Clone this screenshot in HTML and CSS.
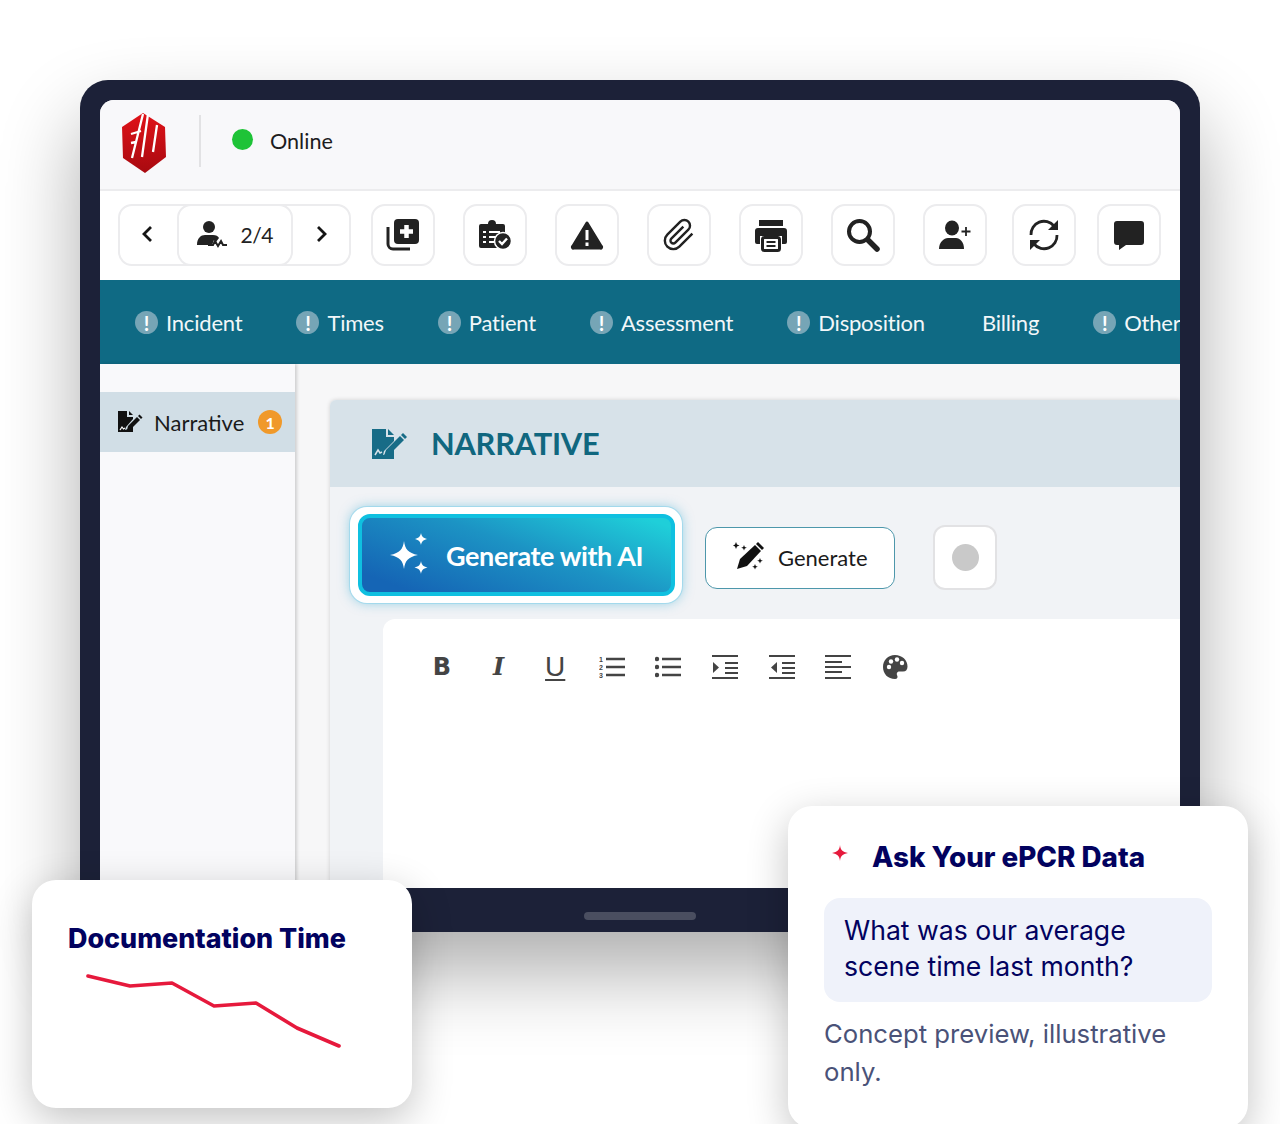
FILE: index.html
```html
<!DOCTYPE html>
<html lang="en">
<head>
    <meta charset="UTF-8">
    <title>ePCR Narrative</title>
    <link rel="stylesheet" href="styles.css">
</head>
<body>
    <div class="stage">
        <div class="device">
            <div class="screen">
                <header class="status-bar">
                    <svg class="logo" viewBox="0 0 44 60">
                        <defs>
                            <linearGradient id="logoRed" x1="0" y1="0" x2="0" y2="1">
                                <stop offset="0" stop-color="#e01218"/>
                                <stop offset="1" stop-color="#a80a10"/>
                            </linearGradient>
                        </defs>
                        <path d="M21 0 43 14 44 44 23 60 1 45 0 14Z" fill="url(#logoRed)"/>
                        <path d="M21 1 10 45M9 21 19 18M9 30 14 29M26 1 20 44M35 12 31 39" fill="none" stroke="#fff" stroke-width="2.300"/>
                    </svg>
                    <span class="divider"></span>
                    <span class="status-dot"></span>
                    <span class="status-text">Online</span>
                </header>

                <div class="toolbar">
                    <div class="pager">
                        <button class="pager-arrow">
                            <svg viewBox="0 0 24 24" width="24" height="24"><path d="M15 5l-7 7 7 7" fill="none" stroke="#151515" stroke-width="2.800"/></svg>
                        </button>
                        <div class="pager-count">
                            <svg viewBox="0 0 30 30" width="30" height="30" fill="#222">
                                <circle cx="12" cy="7" r="6"/>
                                <path d="M0 25c0-7 4-10 8-10h8c3 0 5 1 6 3l-3 4-2-2-2 5H0Z"/>
                                <path d="M11 25h5l2-4 3 5 3-5 2 4h4" fill="none" stroke="#222" stroke-width="2"/>
                            </svg>
                            <span>2/4</span>
                        </div>
                        <button class="pager-arrow">
                            <svg viewBox="0 0 24 24" width="24" height="24"><path d="M9 5l7 7-7 7" fill="none" stroke="#151515" stroke-width="2.800"/></svg>
                        </button>
                    </div>

                    <button class="tool-btn">
                        <svg viewBox="0 0 34 32" width="34" height="32">
                            <rect x="8" y="0" width="25" height="25" rx="4" fill="#222"/>
                            <path d="M20.500 6v13M14 12.500h13" stroke="#fff" stroke-width="4.500"/>
                            <path d="M2 8v17a5 5 0 0 0 5 5h17" fill="none" stroke="#222" stroke-width="3"/>
                        </svg>
                    </button>
                    <button class="tool-btn">
                        <svg viewBox="0 0 34 30" width="34" height="30">
                            <path d="M3 4h7a4 4 0 0 1 8 0h7a2 2 0 0 1 2 2v20a2 2 0 0 1-2 2H3a2 2 0 0 1-2-2V6a2 2 0 0 1 2-2Z" fill="#222"/>
                            <path d="M5 12h3M11 12h11M5 17h3M11 17h9M5 22h3M11 22h7" stroke="#fff" stroke-width="2"/>
                            <circle cx="25" cy="21" r="8.500" fill="#222" stroke="#fff" stroke-width="1.500"/>
                            <path d="M21 21l3 3 5-5.500" fill="none" stroke="#fff" stroke-width="2.400"/>
                        </svg>
                    </button>
                    <button class="tool-btn">
                        <svg viewBox="0 0 34 30" width="34" height="30">
                            <path d="M17 3 31 26a1 1 0 0 1-1 2H4a1 1 0 0 1-1-2Z" fill="#222" stroke="#222" stroke-width="3" stroke-linejoin="round"/>
                            <path d="M17 10v10M17 22.500v3.500" stroke="#fff" stroke-width="3"/>
                        </svg>
                    </button>
                    <button class="tool-btn">
                        <svg viewBox="0 0 24 24" width="34" height="34"><path d="M21.440 11.050l-9.190 9.190a6 6 0 0 1-8.490-8.490l9.190-9.190a4 4 0 0 1 5.660 5.660l-9.200 9.190a2 2 0 0 1-2.830-2.830l8.490-8.480" fill="none" stroke="#222" stroke-width="1.700"/></svg>
                    </button>
                    <button class="tool-btn">
                        <svg viewBox="0 0 34 34" width="34" height="34">
                            <path d="M5 2h24v6H5Z" fill="#222"/>
                            <path d="M4 10h26a3 3 0 0 1 3 3v11a2 2 0 0 1-2 2h-3v-8H6v8H3a2 2 0 0 1-2-2V13a3 3 0 0 1 3-3Z" fill="#222"/>
                            <rect x="8.500" y="19.500" width="17" height="13" rx="2" fill="#fff" stroke="#222" stroke-width="3"/>
                            <path d="M12.500 24h9M12.500 28h9" stroke="#222" stroke-width="2"/>
                        </svg>
                    </button>
                    <button class="tool-btn">
                        <svg viewBox="0 0 34 34" width="34" height="34">
                            <circle cx="13.500" cy="13.500" r="10.500" fill="none" stroke="#222" stroke-width="4"/>
                            <path d="M22 22l9 9" stroke="#222" stroke-width="5.500" stroke-linecap="round"/>
                        </svg>
                    </button>
                    <button class="tool-btn">
                        <svg viewBox="0 0 34 30" width="34" height="30" fill="#222">
                            <ellipse cx="14" cy="8" rx="7" ry="7.500"/>
                            <path d="M1 29c0-7 5-11 9-11h8c4 0 8 4 8 11Z"/>
                            <path d="M28 7v9M23.500 11.500h9" stroke="#222" stroke-width="1.800"/>
                        </svg>
                    </button>
                    <button class="tool-btn tool-btn-near">
                        <svg viewBox="0 0 34 34" width="34" height="34" fill="none" stroke="#222" stroke-width="2.800">
                            <path d="M4 17a13 13 0 0 1 23-9"/>
                            <path d="M30 17a13 13 0 0 1-23 9"/>
                            <path d="M31 2v10H21Z" fill="#222" stroke="none"/>
                            <path d="M3 32V22h10Z" fill="#222" stroke="none"/>
                        </svg>
                    </button>
                    <button class="tool-btn tool-btn-nearer">
                        <svg viewBox="0 0 34 34" width="34" height="34">
                            <path d="M5 3h24a3 3 0 0 1 3 3v18a3 3 0 0 1-3 3H14l-7 5v-5H5a3 3 0 0 1-3-3V6a3 3 0 0 1 3-3Z" fill="#222"/>
                        </svg>
                    </button>
                </div>

                <nav class="tabs">
                    <a class="tab"><span class="alert">!</span>Incident</a>
                    <a class="tab"><span class="alert">!</span>Times</a>
                    <a class="tab"><span class="alert">!</span>Patient</a>
                    <a class="tab"><span class="alert">!</span>Assessment</a>
                    <a class="tab"><span class="alert">!</span>Disposition</a>
                    <a class="tab tab-plain">Billing</a>
                    <a class="tab"><span class="alert">!</span>Other</a>
                </nav>

                <div class="main">
                    <aside class="sidebar">
                        <div class="side-item">
                            <svg viewBox="0 0 26 24" width="26" height="24" fill="#111">
                                <path d="M1 1h9v6h6v2L9 17l-1 3 3-1 5-5v8H1Z"/>
                                <path d="M12 1l4 4h-4Z"/>
                                <path d="M11 16 20 7l3 3-9 9-4 1Z"/>
                                <path d="M21 6l1.500-1.500 3 3L24 9Z"/>
                                <path d="M3 20l2-3 1.500 2 1.500-1" fill="none" stroke="#fff" stroke-width="1.200"/>
                            </svg>
                            <span>Narrative</span>
                            <span class="badge">1</span>
                        </div>
                    </aside>

                    <section class="content">
                        <div class="panel">
                            <div class="panel-head">
                                <svg viewBox="0 0 36 32" width="36" height="32" fill="#176c87">
                                    <path d="M1 1h14v8h8v4L13 23l-1 4 4-1 7-7v12H1Z"/>
                                    <path d="M17 1l6 6h-6Z"/>
                                    <path d="M15 22 29 8l4 4-14 14-6 2Z"/>
                                    <path d="M30 7l2-2 4 4-2 2Z"/>
                                    <path d="M4 27l3-5 2 3 2-1" fill="none" stroke="#d7e2e9" stroke-width="1.500"/>
                                </svg>
                                <h2>NARRATIVE</h2>
                            </div>
                            <div class="panel-body">
                                <div class="actions">
                                    <div class="ai-ring">
                                        <button class="ai-btn">
                                            <svg viewBox="0 0 42 44" width="42" height="44" fill="#fff">
                                                <path d="M15 8c1 8 4 12 14 14-10 2-13 6-14 14-1-8-4-12-14-14 10-2 13-6 14-14Z"/>
                                                <path d="M32 0c.5 3 2 5 6 6-4 1-5.500 3-6 6-.5-3-2-5-6-6 4-1 5.500-3 6-6Z"/>
                                                <path d="M32 28c.5 3.500 2 5.500 6.500 6.500-4.500 1-6 3-6.500 6.500-.5-3.500-2-5.500-6.500-6.500 4.500-1 6-3 6.500-6.500Z"/>
                                            </svg>
                                            <span>Generate with AI</span>
                                        </button>
                                    </div>
                                    <button class="gen-btn">
                                        <svg viewBox="0 0 32 32" width="32" height="32" fill="#111">
                                            <path d="M4 28 7 18 22 4l6 6-14 15Z"/>
                                            <path d="M23 3l2-2 6 6-2 2Z"/>
                                            <path d="M3 1l1 2.500 2.500 1-2.500 1L3 8 2 5.500 0 4.500 2 3.500ZM11 4l.8 2 2 .8-2 .8-.8 2-.8-2-2-.8 2-.8ZM27 17l.8 2 2 .8-2 .8-.8 2-.8-2-2-.8 2-.8ZM22 23l.8 2 2 .8-2 .8-.8 2-.8-2-2-.8 2-.8Z"/>
                                        </svg>
                                        <span>Generate</span>
                                    </button>
                                    <button class="rec-btn"><span class="rec-dot"></span></button>
                                </div>

                                <div class="editor">
                                    <div class="editor-tools">
                                        <span class="fmt fmt-b">B</span>
                                        <span class="fmt fmt-i">I</span>
                                        <span class="fmt fmt-u">U</span>
                                        <svg class="fmt" viewBox="0 0 26 24" width="26" height="24">
                                            <path d="M7 4h19M7 12h19M7 20h19" stroke="#444" stroke-width="2.600"/>
                                            <text x="0" y="6.500" class="fmt-num">1</text>
                                            <text x="0" y="14.500" class="fmt-num">2</text>
                                            <text x="0" y="22.500" class="fmt-num">3</text>
                                        </svg>
                                        <svg class="fmt" viewBox="0 0 26 24" width="26" height="24">
                                            <path d="M7 4h19M7 12h19M7 20h19" stroke="#444" stroke-width="2.600"/>
                                            <circle cx="2" cy="4" r="2.200" fill="#444"/><circle cx="2" cy="12" r="2.200" fill="#444"/><circle cx="2" cy="20" r="2.200" fill="#444"/>
                                        </svg>
                                        <svg class="fmt" viewBox="0 0 26 24" width="26" height="24">
                                            <path d="M0 1h26M13 8h13M13 13h13M13 18h13M0 23h26" stroke="#444" stroke-width="2.200"/>
                                            <path d="M1 7l6 5.500-6 5.500Z" fill="#444"/>
                                        </svg>
                                        <svg class="fmt" viewBox="0 0 26 24" width="26" height="24">
                                            <path d="M0 1h26M13 8h13M13 13h13M13 18h13M0 23h26" stroke="#444" stroke-width="2.200"/>
                                            <path d="M8 7l-6 5.500 6 5.500Z" fill="#444"/>
                                        </svg>
                                        <svg class="fmt" viewBox="0 0 26 24" width="26" height="24">
                                            <path d="M0 1h26M0 7h17M0 12h26M0 17h17M0 23h26" stroke="#444" stroke-width="2.200"/>
                                        </svg>
                                        <svg class="fmt" viewBox="0 0 26 26" width="26" height="26">
                                            <path d="M13 1C6 1 1 6 1 13s5 12 12 12c2.500 0 3-2 2.200-3.500-1-2 0-4 2.300-4H21c3 0 4.500-2 4.500-5C25.500 6 20 1 13 1Z" fill="#444"/>
                                            <circle cx="7" cy="13" r="2.200" fill="#fff"/><circle cx="9" cy="7.500" r="2.200" fill="#fff"/><circle cx="15" cy="5.500" r="2.200" fill="#fff"/><circle cx="20" cy="9" r="2.200" fill="#fff"/>
                                        </svg>
                                    </div>
                                </div>
                            </div>
                        </div>
                    </section>
                </div>
            </div>
            <div class="home-bar"></div>
        </div>

        <div class="card card-time">
            <h3>Documentation Time</h3>
            <svg class="spark" viewBox="0 0 264 84" width="264" height="84">
                <polyline points="2,3 44,13 86,10 128,33 170,30 211,55 253,73" fill="none" stroke="#e6193c" stroke-width="3.600" stroke-linecap="round" stroke-linejoin="round"/>
            </svg>
        </div>

        <div class="card card-ask">
            <div class="ask-title">
                <svg viewBox="0 0 16 16" width="16" height="16"><path d="M8 0c.5 5 2.500 7 8 8-5.500 1-7.500 3-8 8-.5-5-2.500-7-8-8 5.500-1 7.500-3 8-8Z" fill="#e6193c"/></svg>
                <h3>Ask Your ePCR Data</h3>
            </div>
            <p class="ask-question">What was our average scene time last month?</p>
            <p class="ask-note">Concept preview, illustrative only.</p>
        </div>
    </div>
</body>
</html>
```

FILE: styles.css
```css
* {
    box-sizing: border-box;
}

html, body {
    margin: 0;
    background: #fff;
}

.stage {
    position: relative;
    width: 1280px;
    height: 1124px;
    overflow: hidden;
    padding: 80px 80px 0;
    font-family: Lato, sans-serif;
}

.device {
    height: 852px;
    padding: 20px 20px 0;
    background: #1c2138;
    border-radius: 28px;
    box-shadow: 0 40px 80px rgba(0, 0, 0, 0.32);
}

.screen {
    height: 788px;
    display: flex;
    flex-direction: column;
    background: #f7f7f8;
    border-radius: 14px 14px 0 0;
    overflow: hidden;
}

.home-bar {
    width: 112px;
    height: 8px;
    margin: 24px auto 0;
    background: #4a4e60;
    border-radius: 4px;
}

/* top status row */
.status-bar {
    height: 91px;
    flex: none;
    display: flex;
    align-items: center;
    padding: 0 0 8px 22px;
    background: #f8f8fa;
    border-bottom: 2px solid #ececee;
}

.logo {
    width: 44px;
    height: 60px;
    margin-top: 4px;
}

.divider {
    width: 2px;
    height: 52px;
    margin-left: 33px;
    background: #e2e2e4;
}

.status-dot {
    width: 21px;
    height: 21px;
    margin: -2px 0 0 31px;
    background: #1ec337;
    border-radius: 50%;
}

.status-text {
    margin-left: 17px;
    font-size: 21.600px;
    color: #1d1d1f;
}

/* toolbar */
.toolbar {
    height: 89px;
    flex: none;
    display: flex;
    align-items: center;
    gap: 28px;
    padding: 0 0 2px 18px;
    background: #fff;
}

.pager {
    width: 233px;
    height: 62px;
    flex: none;
    display: flex;
    margin-right: -8px;
    border: 2px solid #ececee;
    border-radius: 14px;
}

.pager-arrow {
    flex: 1;
    padding: 2px 0 0;
    border: 0;
    background: none;
}

.pager-count {
    width: 116px;
    flex: none;
    display: flex;
    align-items: center;
    gap: 14px;
    margin: -2px 0;
    padding-left: 18px;
    font-size: 21px;
    letter-spacing: -0.5px;
    color: #222;
    border: 2px solid #ececee;
    border-radius: 14px;
}

.tool-btn {
    width: 64px;
    height: 62px;
    flex: none;
    display: flex;
    align-items: center;
    justify-content: center;
    padding: 0;
    background: #fff;
    border: 2px solid #ececee;
    border-radius: 14px;
}

.tool-btn-near {
    margin-left: -3px;
}

.tool-btn-nearer {
    margin-left: -7px;
}

/* section tabs */
.tabs {
    height: 84px;
    flex: none;
    display: flex;
    align-items: center;
    gap: 54px;
    padding: 1px 0 0 35px;
    background: #0f6a84;
    white-space: nowrap;
}

.tab {
    display: flex;
    align-items: center;
    gap: 8px;
    font-size: 22px;
    letter-spacing: -0.2px;
    color: #f2f7f9;
}

.tab-plain {
    margin-left: 3px;
}

.alert {
    width: 23px;
    height: 23px;
    display: flex;
    align-items: center;
    justify-content: center;
    background: #76a5b6;
    border-radius: 50%;
    font-size: 20px;
    font-weight: 700;
    color: #fff;
}

/* body of the form */
.main {
    flex: 1;
    display: flex;
    min-height: 0;
}

.sidebar {
    width: 195px;
    flex: none;
    padding-top: 28px;
    background: #f9f9fb;
    box-shadow: 2px 0 3px rgba(0, 0, 0, 0.16);
}

.side-item {
    height: 60px;
    display: flex;
    align-items: center;
    padding-left: 17px;
    background: #d1dee6;
    font-size: 22px;
    color: #1a1a1a;
}

.side-item span:first-of-type {
    margin-left: 11px;
}

.badge {
    width: 24px;
    height: 24px;
    margin-left: 14px;
    display: flex;
    align-items: center;
    justify-content: center;
    background: #f0992a;
    border-radius: 50%;
    font-size: 16px;
    font-weight: 700;
    color: #fff;
}

.content {
    flex: 1;
    min-width: 0;
    padding: 36px 0 0 35px;
}

.panel {
    height: 100%;
    background: #f1f3f6;
    border-radius: 6px 0 0 0;
    box-shadow: 0 0 4px rgba(0, 0, 0, 0.16);
}

.panel-head {
    height: 87px;
    display: flex;
    align-items: center;
    gap: 24px;
    padding: 0 0 0 41px;
    background: #d7e2e9;
    border-radius: 6px 0 0 0;
}

.panel-head h2 {
    margin: 0;
    font-size: 30.800px;
    font-weight: 700;
    letter-spacing: -0.250px;
    color: #10677f;
}

.panel-body {
    padding: 20px 0 0 20px;
}

.actions {
    display: flex;
    align-items: center;
}

.ai-ring {
    width: 332px;
    height: 96px;
    padding: 7px 7px 7px 8px;
    background: #fff;
    border-radius: 17px;
    box-shadow: 0 0 0 1px rgba(130, 210, 235, 0.5), 0 0 12px rgba(50, 170, 210, 0.5);
}

.ai-btn {
    width: 100%;
    height: 82px;
    display: flex;
    align-items: center;
    gap: 15px;
    padding: 0 0 0 27px;
    background: linear-gradient(20deg, #1565b5 10%, #1c93c4 55%, #1fcfd9 95%);
    border: 4px solid #0fc0e0;
    border-radius: 12px;
    font-family: Lato, sans-serif;
    font-size: 27px;
    font-weight: 700;
    letter-spacing: -0.400px;
    color: #fff;
}

.gen-btn {
    width: 190px;
    height: 62px;
    display: flex;
    align-items: center;
    gap: 13px;
    margin: 6px 0 0 23px;
    padding: 0 0 2px 27px;
    background: #fff;
    border: 1.500px solid #4d97ab;
    border-radius: 12px;
    font-family: Lato, sans-serif;
    font-size: 22px;
    color: #1a1a1a;
}

.rec-btn {
    width: 64px;
    height: 65px;
    display: flex;
    align-items: center;
    justify-content: center;
    margin: 4px 0 0 38px;
    padding: 0;
    background: #fff;
    border: 2px solid #e2e2e4;
    border-radius: 12px;
}

.rec-dot {
    width: 27px;
    height: 27px;
    background: #c9c9c9;
    border-radius: 50%;
}

.editor {
    height: 300px;
    margin: 16px 0 0 33px;
    padding: 32px 0 0 46px;
    background: #fff;
    border-radius: 12px 0 0 0;
}

.editor-tools {
    display: flex;
    align-items: center;
    gap: 30.600px;
    height: 32px;
}

.fmt {
    width: 26px;
    flex: none;
    text-align: center;
    color: #444;
    font-size: 26px;
    line-height: 32px;
}

.fmt-b {
    font-family: "DejaVu Sans", sans-serif;
    font-size: 24px;
    font-weight: 700;
}

.fmt-i {
    font-family: "DejaVu Serif", serif;
    font-size: 24px;
    font-style: italic;
    font-weight: 700;
}

.fmt-u {
    font-family: "Liberation Sans", sans-serif;
    font-size: 28px;
    text-decoration: underline;
    text-decoration-thickness: 2px;
    text-underline-offset: 3px;
}

.fmt-num {
    font-family: "Liberation Sans", sans-serif;
    font-size: 7px;
    font-weight: 700;
    fill: #444;
}

/* floating cards */
.card {
    position: absolute;
    background: #fff;
    border-radius: 24px;
    box-shadow: 0 12px 40px rgba(0, 0, 0, 0.24);
    font-family: Inter, sans-serif;
}

.card h3 {
    margin: 0;
    font-weight: 800;
    color: #02025f;
}

.card-time {
    left: 32px;
    top: 880px;
    width: 380px;
    height: 228px;
    padding: 42px 36px 0;
}

.card-time h3 {
    font-size: 26.900px;
}

.spark {
    display: block;
    margin: 19px 0 0 18px;
}

.card-ask {
    left: 788px;
    top: 806px;
    width: 460px;
    height: 322px;
    padding: 34px 36px 0;
}

.card-ask h3 {
    font-size: 27.800px;
}

.ask-title {
    display: flex;
    align-items: center;
    gap: 24px;
    margin-left: 8px;
}

.ask-title svg {
    margin-top: -8px;
}

.ask-question {
    margin: 24px 0 0;
    padding: 14px 20px 18px;
    background: #eff2fa;
    border-radius: 16px;
    font-size: 26.600px;
    line-height: 36px;
    color: #02025f;
}

.ask-note {
    margin: 13px 0 0;
    font-size: 25.700px;
    line-height: 38px;
    color: #4a5278;
}
```
